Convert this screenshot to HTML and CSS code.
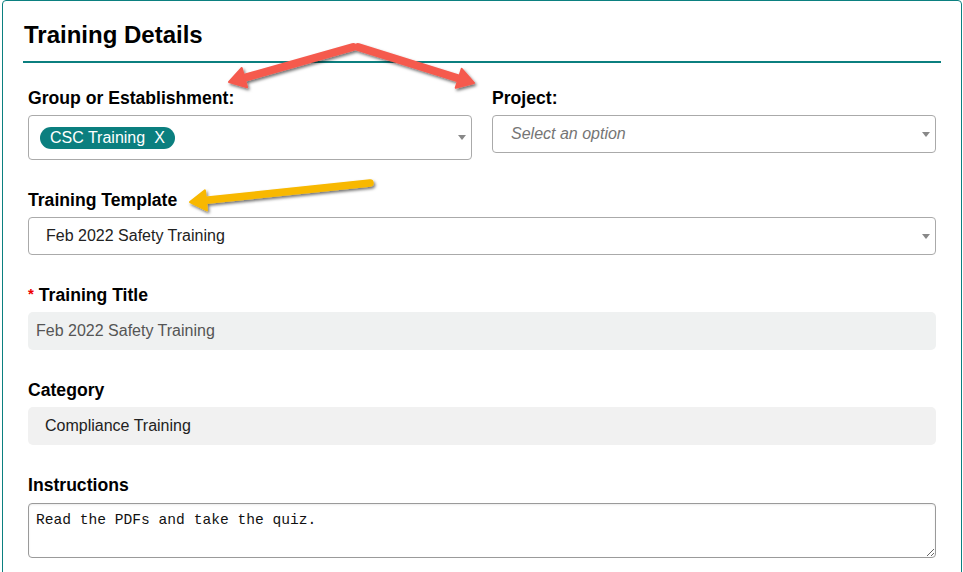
FILE: index.html
```html
<!DOCTYPE html>
<html lang="en">
<head>
    <meta charset="UTF-8">
    <meta name="viewport" content="width=device-width, initial-scale=1.0">
    <title>Training Details</title>
    <link rel="stylesheet" href="styles.css">
</head>
<body>

    <div class="card">
        <div class="card-header">
            <h2>Training Details</h2>
        </div>

        <form class="form-body">
            <div class="form-row">
                <div class="form-group">
                    <label>Group or Establishment:</label>
                    <div class="select-box multi">
                        <span class="chip">CSC Training<span class="chip-remove">X</span></span>
                        <span class="caret"></span>
                    </div>
                </div>
                <div class="form-group">
                    <label>Project:</label>
                    <div class="select-box">
                        <span class="placeholder">Select an option</span>
                        <span class="caret"></span>
                    </div>
                </div>
            </div>

            <div class="form-group">
                <label>Training Template</label>
                <div class="select-box">
                    <span class="value">Feb 2022 Safety Training</span>
                    <span class="caret"></span>
                </div>
            </div>

            <div class="form-group">
                <label><span class="required">*</span>Training Title</label>
                <input type="text" class="field readonly-title" value="Feb 2022 Safety Training" readonly>
            </div>

            <div class="form-group">
                <label>Category</label>
                <input type="text" class="field readonly-category" value="Compliance Training" readonly>
            </div>

            <div class="form-group">
                <label>Instructions</label>
                <textarea class="notes">Read the PDFs and take the quiz.</textarea>
            </div>
        </form>
    </div>

    <!-- callout arrows drawn over the form -->
    <svg class="callouts" width="963" height="572" viewBox="0 0 963 572">
        <defs>
            <filter id="arrowShadow" x="-20%" y="-50%" width="140%" height="200%">
                <feDropShadow dx="1.5" dy="2" stdDeviation="1.4" flood-color="#000" flood-opacity="0.55"/>
            </filter>
        </defs>
        <g filter="url(#arrowShadow)" stroke-linecap="round" stroke-linejoin="round">
            <g class="arrow-red">
                <line x1="353" y1="47" x2="245" y2="77.6"/>
                <polygon points="229,82 241.7,68 247.1,87.3"/>
                <line x1="358" y1="47" x2="458" y2="78.3"/>
                <polygon points="474,83 461.7,68.8 455.7,87.9"/>
            </g>
            <g class="arrow-yellow">
                <line x1="370" y1="183" x2="206" y2="200.3"/>
                <polygon points="190,202 204.9,190.4 207,210.3"/>
            </g>
        </g>
    </svg>

</body>
</html>
```

FILE: styles.css
```css
body {
    font-family: "Liberation Sans", Arial, sans-serif;
    color: #222;
    margin: 0;
    padding: 0 0 0 2px;
    position: relative;
    overflow: hidden;
}

.card {
    width: 960px;
    box-sizing: border-box;
    border: 1px solid #0b8080;
    border-radius: 4px;
    padding: 0 20px 40px;
    background-color: #fff;
}

.card-header {
    padding: 20px 0 12px;
    border-bottom: 2px solid #0b7f7f;
}

.card-header h2 {
    margin: 0;
    font-size: 24px;
    line-height: 28px;
    font-weight: bold;
    color: #000;
    padding-left: 1px;
}

.form-body {
    padding: 24.6px 5px 0;
}

.form-row {
    display: flex;
    gap: 20px;
}

.form-row .form-group {
    flex: 1;
}

.form-group {
    margin-bottom: 30px;
}

.form-group label {
    display: block;
    font-size: 17.6px;
    line-height: 1.15;
    font-weight: bold;
    color: #000;
    margin-bottom: 7px;
}

.required {
    color: #e00;
    font-size: 15px;
    vertical-align: 2px;
    margin-right: 5px;
}

/* select2 style dropdowns */
.select-box {
    display: flex;
    align-items: center;
    justify-content: space-between;
    height: 38px;
    box-sizing: border-box;
    border: 1px solid #aaa;
    border-radius: 4px;
    padding: 0 5px 0 18px;
    background-color: #fff;
    font-size: 16px;
}

.select-box.multi {
    height: 45px;
    padding-left: 11px;
}

.select-box .value {
    color: #222;
    margin-left: -1px;
}

.select-box .placeholder {
    color: #757575;
    font-style: italic;
}

.caret {
    width: 0;
    height: 0;
    border-style: solid;
    border-width: 5px 4.5px 0;
    border-color: #888 transparent transparent;
    margin-top: 1px;
}

.chip {
    display: inline-block;
    height: 22px;
    line-height: 22px;
    padding: 0 10px;
    border-radius: 11px;
    background-color: #0b7f7f;
    color: #fff;
    font-size: 16px;
    margin-top: 1px;
}

.chip-remove {
    margin-left: 9px;
}

.field {
    display: block;
    width: 100%;
    height: 38px;
    box-sizing: border-box;
    border: none;
    border-radius: 5px;
    font-family: "Liberation Sans", Arial, sans-serif;
    font-size: 16px;
    outline: none;
}

.readonly-title {
    background-color: #eff1f1;
    color: #555;
    padding: 0 8px;
}

.readonly-category {
    background-color: #f1f1f1;
    color: #222;
    padding: 0 17px;
}

.notes {
    display: block;
    width: 100%;
    height: 55px;
    box-sizing: border-box;
    border: 1px solid #9a9a9a;
    border-radius: 4px;
    box-shadow: inset 0 1px 2px rgba(0, 0, 0, 0.08);
    padding: 6px 7px;
    font-family: "Liberation Mono", "Courier New", monospace;
    font-size: 14.6px;
    line-height: 1.5;
    color: #111;
    resize: vertical;
}

.callouts {
    position: absolute;
    top: 0;
    left: 0;
    pointer-events: none;
}

.arrow-red line {
    stroke: #f55a4e;
    stroke-width: 8;
}

.arrow-red polygon {
    fill: #f55a4e;
    stroke: #f55a4e;
    stroke-width: 2;
}

.arrow-yellow line {
    stroke: #f8b800;
    stroke-width: 7.5;
}

.arrow-yellow polygon {
    fill: #f8b800;
    stroke: #f8b800;
    stroke-width: 2;
}
```
